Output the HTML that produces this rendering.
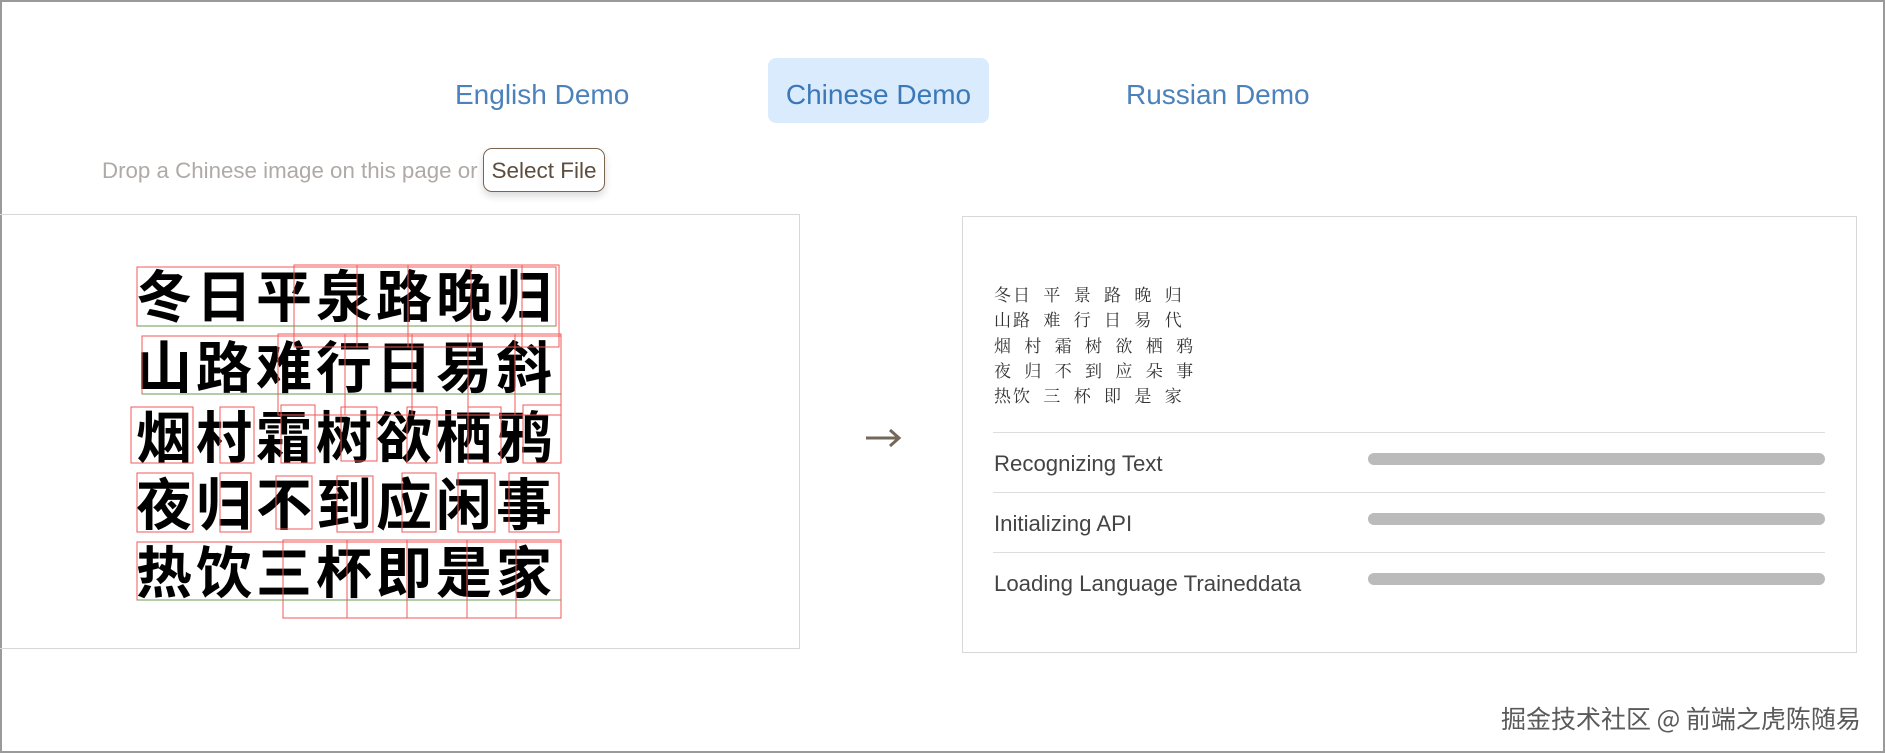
<!DOCTYPE html>
<html><head><meta charset="utf-8"><style>
html,body{margin:0;padding:0;}
body{width:1885px;height:753px;position:relative;overflow:hidden;background:#fff;font-family:"Liberation Sans","Noto Sans CJK SC",sans-serif;}
.frame{position:absolute;left:0;top:0;width:1881px;height:749px;border:2px solid #9a9a9a;}
.tab{position:absolute;top:62px;height:65px;line-height:65px;font-size:28px;color:#4b82bb;font-weight:300;}
.active{top:58px;line-height:73px;height:65px;background:#d9ebfd;border-radius:8px;color:#3a78b8;text-align:center;}
.drop{position:absolute;left:102px;top:158px;font-size:22.3px;color:#b0aaa6;}
.btn{position:absolute;left:483px;top:148px;width:122px;height:44px;border:1px solid #7a6550;border-radius:9px;box-shadow:0 4px 8px rgba(0,0,0,0.15);font-size:22.5px;color:#5e4c3c;line-height:44px;text-align:center;box-sizing:border-box;}
.lp{position:absolute;left:0;top:214px;width:800px;height:435px;border:1px solid #d8d8d8;box-sizing:border-box;border-left:none;}
.rp{position:absolute;left:962px;top:216px;width:895px;height:437px;border:1px solid #d8d8d8;box-sizing:border-box;}
.img{position:absolute;left:136px;font-family:"Noto Sans CJK SC","Liberation Serif",sans-serif;font-weight:700;font-size:56px;color:#000;letter-spacing:4px;line-height:60px;white-space:nowrap;}
.ocr{position:absolute;left:994px;top:281px;font-family:"Noto Serif CJK SC","Liberation Serif",serif;font-size:17px;line-height:25.3px;color:#333;white-space:pre;letter-spacing:2px;word-spacing:5px;}
.hr{position:absolute;left:993px;width:832px;height:1px;background:#ddd;}
.lbl{position:absolute;left:994px;font-size:22.2px;color:#444;font-weight:300;}
.bar{position:absolute;left:1368px;width:457px;height:12px;border-radius:6px;background:#bbb;}
.wm{position:absolute;left:1501px;top:700px;font-size:25px;letter-spacing:0;color:#5a5a5a;text-shadow:0 0 1px #fff;font-family:"Noto Sans CJK SC",sans-serif;}
</style></head><body>
<div class="frame"></div>
<div class="tab" style="left:455px">English Demo</div>
<div class="tab active" style="left:768px;width:221px">Chinese Demo</div>
<div class="tab" style="left:1126px">Russian Demo</div>
<div class="drop">Drop a Chinese image on this page or</div>
<div class="btn">Select File</div>
<div class="lp"></div>
<div class="img" style="top:264px">冬日平泉路晚归</div>
<div class="img" style="top:335px">山路难行日易斜</div>
<div class="img" style="top:405px">烟村霜树欲栖鸦</div>
<div class="img" style="top:472px">夜归不到应闲事</div>
<div class="img" style="top:540px">热饮三杯即是家</div>
<svg style="position:absolute;left:0;top:0" width="800" height="650">
<g fill="none" stroke="#f05a5a" stroke-width="1">
<rect x="137" y="267" width="419" height="59"/>
<rect x="294" y="265" width="265" height="82"/>
<line x1="357" y1="265" x2="357" y2="347"/><line x1="408" y1="265" x2="408" y2="347"/><line x1="471" y1="265" x2="471" y2="347"/><line x1="522" y1="265" x2="522" y2="347"/>
<rect x="142" y="336" width="419" height="58"/>
<rect x="278" y="334" width="283" height="81"/>
<line x1="345" y1="334" x2="345" y2="415"/><line x1="412" y1="334" x2="412" y2="415"/><line x1="468" y1="334" x2="468" y2="415"/><line x1="515" y1="334" x2="515" y2="415"/>
<rect x="131" y="407" width="62" height="56"/><rect x="220" y="407" width="34" height="56"/><rect x="281" y="405" width="34" height="58"/><rect x="341" y="407" width="36" height="54"/><rect x="407" y="407" width="30" height="56"/><rect x="468" y="407" width="33" height="56"/><rect x="523" y="405" width="38" height="58"/>
<rect x="137" y="473" width="56" height="59"/><rect x="220" y="473" width="31" height="59"/><rect x="276" y="476" width="36" height="53"/><rect x="337" y="476" width="36" height="56"/><rect x="402" y="473" width="34" height="59"/><rect x="458" y="473" width="37" height="59"/><rect x="509" y="473" width="50" height="59"/>
<rect x="137" y="542" width="424" height="58"/>
<rect x="283" y="540" width="278" height="78"/>
<line x1="347" y1="540" x2="347" y2="618"/><line x1="407" y1="540" x2="407" y2="618"/><line x1="467" y1="540" x2="467" y2="618"/><line x1="516" y1="540" x2="516" y2="618"/>
</g>
<g stroke="#6a9a50" stroke-width="1"><line x1="137" y1="326" x2="556" y2="326"/><line x1="142" y1="394" x2="561" y2="394"/><line x1="137" y1="600" x2="561" y2="600"/></g>
</svg>
<svg style="position:absolute;left:860px;top:425px" width="50" height="26"><line x1="6" y1="13" x2="38" y2="13" stroke="#756759" stroke-width="3"/><path d="M30 5 L39 13 L30 21" fill="none" stroke="#756759" stroke-width="3"/></svg>
<div class="rp"></div>
<div class="ocr">冬日 平 景 路 晚 归
山路 难 行 日 易 代
烟 村 霜 树 欲 栖 鸦
夜 归 不 到 应 朵 事
热饮 三 杯 即 是 家</div>
<div class="hr" style="top:432px"></div>
<div class="lbl" style="top:451px">Recognizing Text</div>
<div class="bar" style="top:453px"></div>
<div class="hr" style="top:492px"></div>
<div class="lbl" style="top:511px">Initializing API</div>
<div class="bar" style="top:513px"></div>
<div class="hr" style="top:552px"></div>
<div class="lbl" style="top:571px">Loading Language Traineddata</div>
<div class="bar" style="top:573px"></div>
<div class="wm">掘金技术社区 @ 前端之虎陈随易</div>
</body></html>
